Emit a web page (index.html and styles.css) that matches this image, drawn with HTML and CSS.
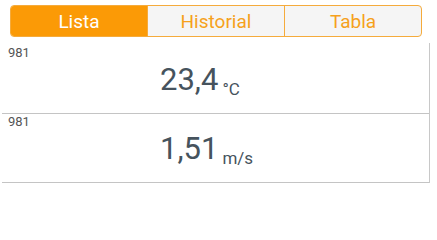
FILE: index.html
```html
<!DOCTYPE html>
<html>
<head>
<meta charset="utf-8">
<link rel="stylesheet" href="styles.css">
</head>
<body>
<div class="tabs">
  <div class="tab active">Lista</div>
  <div class="tab">Historial</div>
  <div class="tab">Tabla</div>
</div>
<div class="list">
  <div class="item">
    <div class="label">981</div>
    <div class="value"><span class="num">23,4</span><span class="unit">°C</span></div>
  </div>
  <div class="item">
    <div class="label">981</div>
    <div class="value"><span class="num">1,51</span><span class="unit">m/s</span></div>
  </div>
</div>
</body>
</html>
```
FILE: styles.css
```css
html, body {
  margin: 0;
  padding: 0;
  background: #ffffff;
  font-family: Roboto, "Liberation Sans", sans-serif;
}
.tabs {
  display: flex;
  margin: 5px 0 0 10px;
  width: 412px;
  height: 32px;
  box-sizing: border-box;
  border: 1px solid #f5ab3c;
  border-radius: 4px;
  overflow: hidden;
  background: #f5f5f5;
}
.tab {
  flex: 1;
  display: flex;
  align-items: center;
  justify-content: center;
  font-size: 19px;
  color: #f6a11c;
  border-left: 1px solid #f5ab3c;
}
.tab:first-child {
  border-left: none;
}
.tab.active {
  background: #fb9a06;
  color: #ffffff;
}
.list {
  margin: 6px 0 0 2px;
  width: 428px;
  box-sizing: border-box;
  border-right: 1px solid #c8c8c8;
  padding-top: 2px;
}
.item {
  height: 68px;
  border-bottom: 1px solid #c4c4c4;
}
.label {
  padding: 1px 0 0 6px;
  font-size: 13px;
  line-height: 14px;
  color: #555555;
}
.value {
  padding-left: 158px;
  margin-top: 2px;
  line-height: 36px;
  color: #46535d;
  white-space: nowrap;
}
.num {
  font-size: 31px;
}
.unit {
  font-size: 17px;
  margin-left: 4px;
  vertical-align: -5px;
}
```
